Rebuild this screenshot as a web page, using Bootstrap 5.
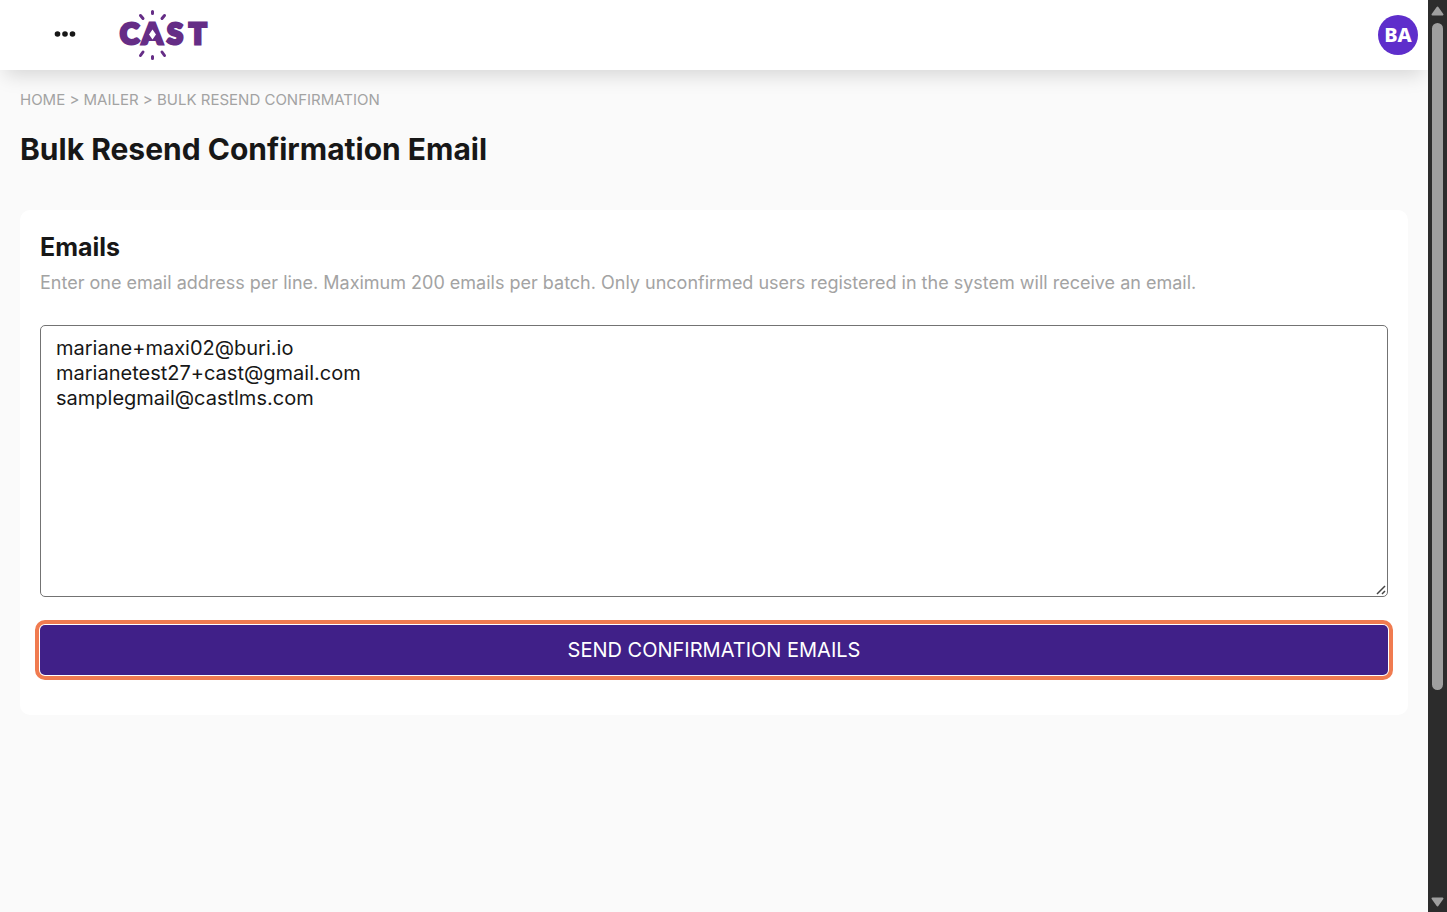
<!DOCTYPE html>
<html lang="en">
<head>
<meta charset="utf-8">
<meta name="viewport" content="width=device-width, initial-scale=1">
<title>Bulk Resend Confirmation Email</title>
<link href="https://cdn.jsdelivr.net/npm/bootstrap@5.3.0/dist/css/bootstrap.min.css" rel="stylesheet">
<style>
  body { font-family: Inter, sans-serif; background: #fafafa; color: #171717; }
  .topbar { height: 70px; padding: 0 10px 0 50px; background: #fff; box-shadow: 0 10px 20px -5px rgba(0, 0, 0, .15); }
  .menu-btn { width: 30px; height: 30px; }
  .brand { margin-left: 40px; }
  .brand text { font: 900 29px Lato, sans-serif; fill: #652d86; stroke: #652d86; stroke-width: 3; stroke-linejoin: miter; }
  .avatar { width: 40px; height: 40px; background: #5e2ecb; font: 800 20px/40px "Noto Sans", sans-serif; }
  .page { padding: 20px; }
  .crumbs { font-size: 15px; line-height: 20px; }
  .crumbs, .crumbs a, .hint { color: #a3a3a3; }
  .page-title { font-size: 30px; line-height: 38px; font-weight: 700; margin: 20px 0 42px; }
  .panel { background: #fff; border-radius: 10px; padding: 20px 20px 40px; }
  .field-title { font-size: 25px; line-height: 34px; font-weight: 700; }
  .hint { font-size: 18px; line-height: 26px; margin: 6px 0 29px; }
  .emails { height: 272px; padding: 10px 15px; font-size: 20px; line-height: 25px; border: 1px solid #737373; border-radius: 5px; color: #171717; }
  .emails::-webkit-resizer { background: url("data:image/svg+xml,%3Csvg xmlns='http://www.w3.org/2000/svg' width='15' height='15'%3E%3Cpath d='M5 13L13 5M10 13L13 10' stroke='%23444' stroke-width='1.5'/%3E%3C/svg%3E") no-repeat right bottom; }
  .send { height: 50px; margin-top: 28px; font-size: 20px; line-height: 25px; border: 0; border-radius: 5px; background: #402088; color: #fff; outline: 4px solid #f07b50; outline-offset: 1px; }
  .send:hover { background: #402088; color: #fff; }
  .scroll-rail { width: 19px; background: #2c2c2c; padding: 6px 0 5px; }
  .scroll-thumb { width: 11px; height: 74%; border-radius: 6px; background: #9f9f9f; margin-top: 7px; }
</style>
</head>
<body>
<div class="d-flex vh-100 overflow-hidden">
  <div class="flex-grow-1 overflow-hidden">
    <header class="topbar d-flex align-items-center">
      <button class="menu-btn btn border-0 p-0 d-flex align-items-center justify-content-center" type="button" aria-label="Menu">
        <svg width="22" height="8" viewBox="0 0 22 8" fill="#171717"><circle cx="3.5" cy="3" r="2.8"/><circle cx="11" cy="3" r="2.8"/><circle cx="18.5" cy="3" r="2.8"/></svg>
      </button>
      <a class="brand" href="#" aria-label="CAST home">
        <svg class="d-block overflow-visible" width="88" height="50" viewBox="0 0 88 50">
          <text x="0" y="34">C</text><text x="22" y="34">A</text><text x="47" y="34">S</text><text x="69" y="34">T</text>
          <path d="M30 16h5l5 15H25z" fill="#652d86"/>
          <path d="M32.500 19.500l3.500 5-3.500 5-3.500-5z" fill="#fff"/>
          <path d="M32.500 1.500v2M20.500 5.500l2.500 3M44.500 5.500l-2.500 3M32.500 46.500v2M23 42l-2.500 3.500M42 42l2.500 3.500" fill="none" stroke="#652d86" stroke-width="3" stroke-linecap="round"/>
        </svg>
      </a>
      <button class="avatar btn border-0 rounded-circle p-0 text-white ms-auto" type="button">BA</button>
    </header>
    <main class="page">
      <nav class="crumbs" aria-label="Breadcrumb"><a class="text-decoration-none" href="#">HOME</a> &gt; <a class="text-decoration-none" href="#">MAILER</a> &gt; <a class="text-decoration-none" href="#">BULK RESEND CONFIRMATION</a></nav>
      <h1 class="page-title">Bulk Resend Confirmation Email</h1>
      <form class="panel">
        <label class="field-title d-block" for="emails">Emails</label>
        <p class="hint" id="emails-hint">Enter one email address per line. Maximum 200 emails per batch. Only unconfirmed users registered in the system will receive an email.</p>
        <textarea class="emails form-control" id="emails" aria-describedby="emails-hint" spellcheck="false">mariane+maxi02@buri.io
marianetest27+cast@gmail.com
samplegmail@castlms.com</textarea>
        <button class="send btn w-100" type="button">SEND CONFIRMATION EMAILS</button>
      </form>
    </main>
  </div>
  <div class="scroll-rail d-flex flex-column align-items-center flex-shrink-0" aria-hidden="true">
    <svg class="flex-shrink-0" width="13" height="10" viewBox="0 0 13 10"><path d="M6.500 1.500L11.500 8.500H1.500z" fill="#9f9f9f" stroke="#9f9f9f" stroke-width="2" stroke-linejoin="round"/></svg>
    <div class="scroll-thumb"></div>
    <svg class="flex-shrink-0 mt-auto" width="13" height="10" viewBox="0 0 13 10"><path d="M6.500 8.500L11.500 1.500H1.500z" fill="#9f9f9f" stroke="#9f9f9f" stroke-width="2" stroke-linejoin="round"/></svg>
  </div>
</div>
<script src="https://cdn.jsdelivr.net/npm/bootstrap@5.3.0/dist/js/bootstrap.bundle.min.js"></script>
</body>
</html>
